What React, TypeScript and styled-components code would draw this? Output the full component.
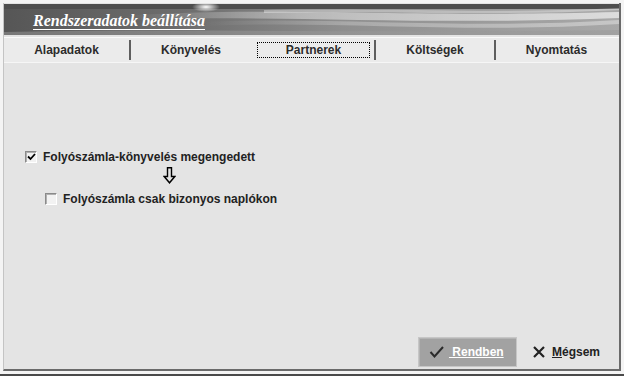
import styled, { createGlobalStyle } from "styled-components";

const GlobalStyle = createGlobalStyle`
  html, body {
    margin: 0;
    padding: 0;
    background: #e4e4e4;
  }
  * {
    box-sizing: border-box;
  }
`;

const Outer = styled.div`
  width: 624px;
  height: 376px;
  padding: 3px 3px 3px 3px;
  background: #f4f4f4;
  border-bottom: 2px solid #4a4a4a;
  display: flex;
  font-family: "Liberation Sans", Arial, sans-serif;
`;

const Frame = styled.div`
  flex: 1;
  display: flex;
  flex-direction: column;
  background: #e4e4e4;
  border-left: 1px solid #c4c4c4;
  border-right: 2px solid #6a6a6a;
  border-bottom: 2px solid #6a6a6a;
`;

const Banner = styled.div`
  position: relative;
  height: 31px;
  margin-top: 1px;
  background: linear-gradient(90deg, #565656 0%, #6e6e6e 30%, #8e8e8e 55%, #a8a8a8 100%);
  overflow: hidden;
  display: flex;
  align-items: center;
  padding-left: 29px;
`;

const BannerArt = styled.svg`
  position: absolute;
  inset: 0;
  width: 100%;
  height: 100%;
`;

const Title = styled.h1`
  position: relative;
  margin: 3px 0 0;
  font-family: "Liberation Serif", "Times New Roman", serif;
  font-style: italic;
  font-weight: bold;
  font-size: 16px;
  color: #ffffff;
  text-decoration: underline;
  text-decoration-thickness: 1px;
  text-underline-offset: 3px;
`;

const TabBar = styled.div`
  display: grid;
  grid-template-columns: 127px 122px 123px 120px 1fr;
  height: 26px;
  margin-top: 2px;
  background: #ebebeb;
  border-top: 1px solid #fafafa;
  border-bottom: 1px solid #f6f6f6;
`;

const Tab = styled.div<{ $divider: boolean }>`
  display: flex;
  align-items: center;
  justify-content: center;
  margin: 2px 0;
  border-right: 2px solid ${(p) => (p.$divider ? "#5e5e5e" : "transparent")};
  font-weight: bold;
  font-size: 12px;
  color: #2c2c2c;
`;

const TabFocus = styled.span<{ $active: boolean }>`
  display: flex;
  align-items: center;
  justify-content: center;
  width: ${(p) => (p.$active ? "113px" : "auto")};
  height: 16px;
  margin-top: -1px;
  border: 1px dotted ${(p) => (p.$active ? "#000" : "transparent")};
`;

const Content = styled.div`
  flex: 1;
  display: flex;
  flex-direction: column;
  padding: 87px 0 0 21px;
`;

const CheckRow = styled.label<{ $indent: number }>`
  display: flex;
  align-items: center;
  gap: 6px;
  margin-left: ${(p) => p.$indent}px;
  font-weight: bold;
  font-size: 12px;
  color: #222;
`;

const Box = styled.span`
  width: 12px;
  height: 12px;
  background: #f2f2f2;
  border-top: 1px solid #8a8a8a;
  border-left: 1px solid #8a8a8a;
  border-right: 1px solid #ffffff;
  border-bottom: 1px solid #ffffff;
  box-shadow: inset 1px 1px 0 #b0b0b0;
  display: flex;
  align-items: center;
  justify-content: center;
`;

const ArrowWrap = styled.div`
  height: 28px;
  padding: 3px 0 0 138px;
`;

const Footer = styled.div`
  display: flex;
  justify-content: flex-end;
  align-items: flex-end;
  gap: 16px;
  padding: 0 19px 2px 0;
`;

const OkButton = styled.button`
  width: 99px;
  height: 30px;
  display: flex;
  align-items: center;
  gap: 4px;
  padding: 0 0 0 10px;
  background: #a2a2a2;
  border: 1px solid #c6c6c6;
  box-shadow: inset 1px 1px 0 #b4b4b4;
  font-family: inherit;
  font-weight: bold;
  font-size: 12px;
  color: #ffffff;
`;

const OkLabel = styled.span`
  text-decoration: underline;
  white-space: pre;
`;

const CancelButton = styled.button`
  display: flex;
  align-items: center;
  gap: 7px;
  height: 30px;
  padding: 0;
  background: none;
  border: none;
  font-family: inherit;
  font-weight: bold;
  font-size: 12px;
  color: #222;
`;

const Key = styled.span`
  text-decoration: underline;
`;

const tabs = ["Alapadatok", "Könyvelés", "Partnerek", "Költségek", "Nyomtatás"];
const active = 2;

function App() {
  return (
    <>
      <GlobalStyle />
      <Outer>
        <Frame>
          <Banner>
            <BannerArt viewBox="0 0 615 31" preserveAspectRatio="none">
              <defs>
                <radialGradient id="glint" cx="0.5" cy="0.5" r="0.5">
                  <stop offset="0" stopColor="#fff" stopOpacity="1" />
                  <stop offset="1" stopColor="#fff" stopOpacity="0" />
                </radialGradient>
                <linearGradient id="fade" x1="0" x2="1">
                  <stop offset="0" stopColor="#fff" stopOpacity="0" />
                  <stop offset="0.35" stopColor="#fff" stopOpacity="0.4" />
                  <stop offset="1" stopColor="#fff" stopOpacity="0.6" />
                </linearGradient>
              </defs>
              <rect x="0" y="0" width="615" height="5" fill="#4e4e4e" />
              <path d="M120 12 C260 2 380 14 615 8 L615 14 C420 22 260 10 120 16 Z" fill="url(#fade)" />
              <path d="M200 18 C320 12 460 26 615 16 L615 20 C460 30 330 16 200 22 Z" fill="url(#fade)" opacity="0.6" />
              <path d="M260 6 C400 4 500 10 615 4 L615 6 C500 12 400 7 260 9 Z" fill="#fff" opacity="0.35" />
              <path d="M0 28 C200 24 400 30 615 26 L615 31 L0 31 Z" fill="#9a9a9a" opacity="0.5" />
              <ellipse cx="202" cy="3" rx="14" ry="5" fill="url(#glint)" />
            </BannerArt>
            <Title>Rendszeradatok beállítása</Title>
          </Banner>
          <TabBar>
            {tabs.map((t, i) => (
              <Tab key={t} $divider={i !== active - 1 && i !== tabs.length - 1}>
                <TabFocus $active={i === active}>{t}</TabFocus>
              </Tab>
            ))}
          </TabBar>
          <Content>
            <CheckRow $indent={0}>
              <Box>
                <svg width="9" height="8" viewBox="0 0 9 8">
                  <path d="M1 3.5 L3.5 6 L8 1" stroke="#000" strokeWidth="1.8" fill="none" />
                </svg>
              </Box>
              Folyószámla-könyvelés megengedett
            </CheckRow>
            <ArrowWrap>
              <svg width="13" height="17" viewBox="0 0 13 17">
                <path d="M4.5 0.75 H8.5 V9.5 H11.8 L6.5 15.8 L1.2 9.5 H4.5 Z" stroke="#000" strokeWidth="1.4" fill="none" />
              </svg>
            </ArrowWrap>
            <CheckRow $indent={20}>
              <Box />
              Folyószámla csak bizonyos naplókon
            </CheckRow>
          </Content>
          <Footer>
            <OkButton>
              <svg width="16" height="12" viewBox="0 0 16 12">
                <path d="M1.5 6 L5.5 10.5 L14 1" stroke="#2a2a2a" strokeWidth="2" fill="none" />
              </svg>
              <OkLabel> Rendben</OkLabel>
            </OkButton>
            <CancelButton>
              <svg width="12" height="12" viewBox="0 0 12 12">
                <path d="M1 1 L11 11 M11 1 L1 11" stroke="#222" strokeWidth="2.2" />
              </svg>
              <span>
                <Key>M</Key>égsem
              </span>
            </CancelButton>
          </Footer>
        </Frame>
      </Outer>
    </>
  );
}

export default App;
